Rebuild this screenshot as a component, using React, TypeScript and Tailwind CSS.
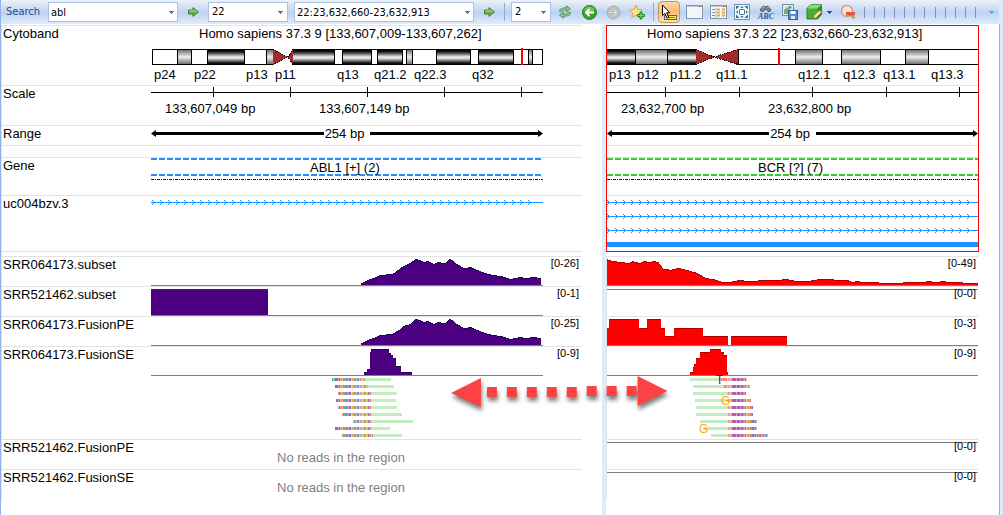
import type { ReactNode } from "react";

type Pt = [number, number];
type Mark = { x: number; text: string };
type Frame = { x: number; w: number };

const LEFT: Frame = { x: 151, w: 392 };
const RIGHT: Frame = { x: 607, w: 371 };

/* ---------- track helpers ---------- */

function Plot({ frame, top, height, children }: { frame: Frame; top: number; height: number; children: ReactNode }) {
  return (
    <svg
      className="block h-full w-full"
      viewBox={`${frame.x} ${top} ${frame.w} ${height}`}
      preserveAspectRatio="none"
      shapeRendering="crispEdges"
      aria-hidden="true"
    >
      {children}
    </svg>
  );
}

function Marks({ frame, items, className }: { frame: Frame; items: Mark[]; className: string }) {
  return (
    <>
      {items.map((m) => (
        <span
          key={m.text + m.x}
          className={`absolute whitespace-nowrap ${className}`}
          style={{ left: `${((m.x - frame.x) / frame.w) * 100}%` }}
        >
          {m.text}
        </span>
      ))}
    </>
  );
}

function sample(points: Pt[]): Pt[] {
  const out: Pt[] = [];
  for (let x = points[0][0]; x <= points[points.length - 1][0]; x++) {
    let i = 0;
    while (i < points.length - 2 && points[i + 1][0] <= x) i++;
    const [x0, y0] = points[i];
    const [x1, y1] = points[i + 1];
    out.push([x, Math.round(y0 + ((y1 - y0) * (x - x0)) / (x1 - x0 || 1))]);
  }
  return out;
}

function Histogram({ points, base, fill, edge }: { points: Pt[]; base: number; fill: string; edge: string }) {
  return (
    <g>
      {sample(points).map(([x, y]) => (
        <g key={x}>
          <rect x={x} y={y} width="1" height={base - y} fill={fill} />
          <rect x={x} y={y} width="1" height="1" fill={edge} />
        </g>
      ))}
    </g>
  );
}

type Bar = [number, number, number];

function Bars({ bars, base, fill, edge }: { bars: Bar[]; base: number; fill: string; edge: string }) {
  return (
    <g>
      {bars.map(([x0, x1, y]) => (
        <g key={x0}>
          <rect x={x0} y={y} width={x1 - x0} height={base - y} fill={fill} />
          <rect x={x0} y={y} width={x1 - x0} height="1" fill={edge} />
        </g>
      ))}
    </g>
  );
}

function Baseline({ frame, y }: { frame: Frame; y: number }) {
  return <rect x={frame.x} y={y} width={frame.w} height="1" fill="#808080" />;
}

/* ---------- cytoband ---------- */

type Band = [number, number, "dark" | "light"];

function Ideogram({ frame, start, end, bands, cent, cursor, id }: { frame: Frame; start: number; end: number; bands: Band[]; cent: [number, number, number]; cursor: number; id: string }) {
  return (
    <Plot frame={frame} top={26} height={59}>
      <defs>
        <linearGradient id={`${id}-dark`} x1="0" y1="0" x2="0" y2="1">
          <stop offset="0" stopColor="#000" />
          <stop offset="0.15" stopColor="#222" />
          <stop offset="0.5" stopColor="#ededed" />
          <stop offset="0.6" stopColor="#dcdcdc" />
          <stop offset="0.9" stopColor="#222" />
          <stop offset="1" stopColor="#000" />
        </linearGradient>
        <linearGradient id={`${id}-light`} x1="0" y1="0" x2="0" y2="1">
          <stop offset="0" stopColor="#707070" />
          <stop offset="0.5" stopColor="#efefef" />
          <stop offset="1" stopColor="#707070" />
        </linearGradient>
      </defs>
      <rect x={start} y="49" width={cent[0] - start} height="16" fill="#000" />
      <rect x={start + 1} y="50" width={cent[0] - start - 1} height="14" fill="#fff" />
      <rect x={cent[2]} y="49" width={end - cent[2]} height="16" fill="#000" />
      <rect x={cent[2] + 1} y="50" width={end - cent[2] - 2} height="14" fill="#fff" />
      {bands.map(([a, b, tone]) => (
        <g key={a}>
          <rect x={a} y="49" width={b - a + 1} height="16" fill="#000" />
          <rect x={a + 1} y="50" width={b - a - 1} height="14" fill={`url(#${id}-${tone})`} />
        </g>
      ))}
      <path d={`M${cent[0]} 49L${cent[1]} 57L${cent[0]} 65Z M${cent[2]} 49L${cent[1]} 57L${cent[2]} 65Z`} fill="#a52a2a" />
      <path
        d={`M${cent[0]} 49.5L${cent[1]} 57L${cent[0]} 64.5 M${cent[2]} 49.5L${cent[1]} 57L${cent[2]} 64.5`}
        fill="none"
        stroke="#000"
        strokeDasharray="1 1"
      />
      <rect x={cursor} y="48" width="2" height="17" fill="#f00" />
    </Plot>
  );
}

/* ---------- gene rows ---------- */

function ScaleAxis({ frame, ticks }: { frame: Frame; ticks: number[] }) {
  return (
    <Plot frame={frame} top={86} height={39}>
      <rect x={frame.x} y="92" width={frame.w} height="1" fill="#000" />
      {ticks.map((t) => (
        <rect key={t} x={t} y="87" width="1" height="10" fill="#000" />
      ))}
    </Plot>
  );
}

function RangeArrow() {
  return (
    <div className="flex h-[15px] items-center text-black">
      <svg className="h-[7px] w-[5px] shrink-0" viewBox="0 0 5 7" aria-hidden="true"><path d="M0 3.5L5 0V7Z" /></svg>
      <div className="h-[3px] flex-1 bg-black" />
      <span className="pr-1.5 pl-px leading-[15px]">254 bp</span>
      <div className="h-[3px] flex-1 bg-black" />
      <svg className="h-[7px] w-[5px] shrink-0" viewBox="0 0 5 7" aria-hidden="true"><path d="M5 3.5L0 0V7Z" /></svg>
    </div>
  );
}

function GeneSpan({ frame, color }: { frame: Frame; color: string }) {
  const end = frame.x + frame.w;
  return (
    <Plot frame={frame} top={158} height={37}>
      <path d={`M${frame.x} 159H${end}M${frame.x} 175H${end}`} stroke={color} strokeWidth="2" strokeDasharray="6 2" />
      <path d={`M${frame.x} 179.5H${end}`} stroke="#2b1018" strokeDasharray="3 1 1 1" />
    </Plot>
  );
}

function Transcripts({ frame, rows, first, solid }: { frame: Frame; rows: number[]; first: number; solid?: boolean }) {
  const heads = Array.from({ length: Math.floor((frame.w - 10) / 8) + 1 }, (_, i) => first + i * 8);
  return (
    <Plot frame={frame} top={196} height={55}>
      {rows.map((y) => (
        <g key={y} fill="#1e90ff">
          <rect x={frame.x} y={y} width={frame.w} height="1" />
          {heads.map((x) => (
            <path key={x} d={`M${x - 2} ${y - 2}h1v1h1v3h-1v1h-1v-1h1v-3h-1z`} />
          ))}
        </g>
      ))}
      {solid && <rect x={frame.x} y="242" width={frame.w} height="5" fill="#1e90ff" />}
    </Plot>
  );
}

/* ---------- coverage data ---------- */

const subsetLeft: Pt[] = [
  [361, 283], [363, 282], [367, 280], [373, 278], [380, 275], [391, 274], [395, 272], [400, 268], [403, 266], [410, 263],
  [415, 259], [420, 260], [423, 262], [428, 261], [434, 264], [437, 262], [445, 263], [449, 259], [452, 260], [455, 263],
  [460, 266], [463, 268], [471, 267], [477, 270], [485, 273], [493, 275], [501, 276], [510, 279], [520, 277], [526, 278],
  [533, 277], [540, 278],
];
const pairedLeft: Pt[] = subsetLeft.map(([x, y], i) => [x, y + 60 + (i > 5 && i < 10 ? i % 2 : 0)]);
const subsetRight: Pt[] = [
  [607, 259], [609, 260], [613, 261], [620, 262], [629, 263], [632, 261], [636, 262], [639, 263], [643, 261], [650, 262],
  [653, 261], [658, 262], [660, 265], [663, 269], [668, 269], [670, 270], [673, 269], [678, 268], [683, 269], [690, 271],
  [697, 273], [702, 276], [705, 278], [713, 279], [722, 282], [730, 282], [733, 281], [740, 280], [747, 281], [767, 280],
  [778, 280], [785, 279], [792, 280], [795, 281], [807, 281], [820, 279], [830, 279], [837, 280], [848, 280], [852, 282],
  [857, 281], [863, 282], [895, 283], [910, 282], [923, 282], [928, 281], [935, 282], [943, 281], [948, 282], [977, 283],
];
const singleLeft: Bar[] = [
  [364, 367, 372], [367, 370, 369], [370, 371, 352], [371, 389, 349], [389, 391, 353], [391, 393, 355], [393, 396, 358],
  [396, 401, 366], [401, 412, 372],
];
const pairedRight: Bar[] = [
  [607, 609, 328], [609, 639, 319], [639, 647, 328], [647, 661, 319], [661, 665, 328], [665, 674, 336], [674, 703, 328],
  [703, 728, 336], [731, 787, 336],
];
const singleRight: Bar[] = [
  [690, 693, 372], [693, 694, 367], [694, 696, 364], [696, 700, 358], [700, 710, 352], [710, 721, 349], [721, 724, 352],
  [724, 727, 355], [727, 728, 372],
];

/* ---------- read alignments ---------- */

const hue: Record<string, string> = {
  t: "#5fb5b5", p: "#b05cb5", v: "#8878c0", r: "#ff7a66", o: "#ffa25c", y: "#ffd06c", l: "#9fd0cc", k: "#d29ccb", g: "#a3ac7c",
};
const LEFT_BASES = "tltpvpkpokotttvtkpvyokgtltvykoyogryovorygo";
const RIGHT_BASES = "rogrorykoyopvppkvppkvprkvyogkrtvpkvltrtvlrrkrtl";

type Read = { from: number; mid: number; to: number };
const leftReads: Read[] = [
  { from: 332, mid: 365, to: 391 }, { from: 335, mid: 368, to: 394 }, { from: 338, mid: 371, to: 397 },
  { from: 336, mid: 371, to: 396 }, { from: 338, mid: 371, to: 397 }, { from: 342, mid: 371, to: 402 },
  { from: 353, mid: 371, to: 413 }, { from: 335, mid: 371, to: 390 }, { from: 342, mid: 373, to: 402 },
];
const rightReads: Read[] = [
  { from: 690, mid: 721, to: 747 }, { from: 693, mid: 724, to: 750 }, { from: 693, mid: 727, to: 746 },
  { from: 695, mid: 727, to: 751 }, { from: 696, mid: 727, to: 753 }, { from: 696, mid: 727, to: 753 },
  { from: 700, mid: 727, to: 757 }, { from: 703, mid: 727, to: 757 }, { from: 711, mid: 727, to: 768 },
];

function Reads({ reads, clip, origin, bases }: { reads: Read[]; clip: "start" | "end"; origin: number; bases: string }) {
  return (
    <g>
      {reads.map((r, i) => {
        const y = 378 + i * 7;
        const [a, b] = clip === "start" ? [r.from, r.mid] : [r.mid, r.to];
        return (
          <g key={i}>
            <rect x={r.from} y={y} width={r.to - r.from} height="3" fill="#c3edc0" />
            {Array.from({ length: b - a }, (_, k) => (
              <rect key={k} x={a + k} y={y} width="1" height="3" fill={hue[bases[(a + k - origin) % bases.length]]} />
            ))}
          </g>
        );
      })}
    </g>
  );
}

/* ---------- layout ---------- */

type RowProps = { h: string; label?: string; scale?: string; line?: string; children?: ReactNode };

function LeftRow({ h, label, scale, children }: RowProps) {
  return (
    <div className={`flex border-t border-[#e3e3e3] ${h}`}>
      <div className="w-[149px] shrink-0 pl-px leading-[15px]">{label}</div>
      <div className="relative min-w-0 flex-1">{children}</div>
      <div className="w-[39px] shrink-0 pr-[3px] text-right text-[11px] leading-[13px]">{scale}</div>
    </div>
  );
}

function RightRow({ h, scale, line = "border-[#e3e3e3]", children }: RowProps) {
  return (
    <div className={`relative border-t ${line} ${h}`}>
      {children}
      {scale && <span className="absolute top-0 right-0.5 text-[11px] leading-[13px]">{scale}</span>}
    </div>
  );
}

/* ---------- toolbar ---------- */

function Tool({ label, children, active, wide }: { label: string; children: ReactNode; active?: boolean; wide?: boolean }) {
  return (
    <button
      type="button"
      aria-label={label}
      className={`flex h-[22px] shrink-0 items-center justify-center ${wide ? "w-[34px] gap-1" : active ? "mr-0.5 w-[22px]" : "w-6"} ${
        active ? "rounded-sm border border-[#c0985a] bg-linear-to-b from-[#fbd7a8] via-[#fdbb6e] to-[#ffe3a6]" : ""
      }`}
    >
      {children}
    </button>
  );
}

function Caret({ color = "#4a7ab8" }: { color?: string }) {
  return (
    <svg className="h-[3px] w-[5px] shrink-0" viewBox="0 0 5 3" shapeRendering="crispEdges" aria-hidden="true">
      <path d="M0 0H5V1H4V2H3V3H2V2H1V1H0Z" fill={color} />
    </svg>
  );
}

function EditCombo({ label, value, width, id }: { label: string; value: string; width: string; id?: string }) {
  return (
    <div className={`flex h-5 shrink-0 items-center border border-[#a9c0e4] bg-white ${width}`}>
      <input id={id} aria-label={label} defaultValue={value} className="h-full min-w-0 flex-1 bg-transparent pl-0.5 text-[11px] text-black outline-none" />
      <button type="button" aria-label={`${label} list`} className="flex h-full w-3 items-center justify-center"><Caret /></button>
    </div>
  );
}

function PickCombo({ label, value, options, width }: { label: string; value: string; options: string[]; width: string }) {
  return (
    <div className={`relative flex h-5 shrink-0 items-center border border-[#a9c0e4] bg-white ${width}`}>
      <select aria-label={label} defaultValue={value} className="h-full w-full appearance-none bg-transparent pl-[3px] text-[11px] text-black outline-none">
        {options.map((o) => (
          <option key={o}>{o}</option>
        ))}
      </select>
      <span className="pointer-events-none absolute right-1"><Caret /></span>
    </div>
  );
}

function Go({ label }: { label: string }) {
  return (
    <button type="button" aria-label={label} className="flex h-[22px] w-[30px] shrink-0 items-center justify-center">
      <svg width="11" height="10" viewBox="0 0 11 10" aria-hidden="true">
        <path d="M0.5 3H5V0.6L10.4 5L5 9.4V7H0.5Z" fill="#6ab04a" stroke="#3f7f2c" />
        <path d="M1.5 4H6V3L8.5 5" fill="none" stroke="#b4dc94" />
      </svg>
    </button>
  );
}

const Separator = ({ className }: { className: string }) => <span className={`h-[18px] w-px shrink-0 bg-[#8aa9d6] ${className}`} />;

function Toolbar() {
  return (
    <div className="mr-1 flex h-[25px] items-center rounded-r-sm bg-linear-to-b from-[#eef2f8] from-0% via-[#bdd3f2] via-50% to-[#e3eefc] to-100% pb-px pl-[5px] font-['DejaVu_Sans_Condensed','DejaVu_Sans',sans-serif] text-[11px]">
      <label htmlFor="search" className="w-[42px] shrink-0 text-[#1e4c96]">Search</label>
      <EditCombo id="search" label="Search" value="abl" width="w-[130px]" />
      <Go label="Run search" />
      <PickCombo label="Chromosome" value="22" options={["9", "22"]} width="w-20" />
      <span className="w-1.5 shrink-0" />
      <EditCombo label="Region" value="22:23,632,660-23,632,913" width="w-[180px]" />
      <Go label="Go to region" />
      <Separator className="mr-1.5" />
      <PickCombo label="Views" value="2" options={["1", "2", "3", "4"]} width="w-10" />
      <span className="w-0.5 shrink-0" />
      <Tool label="Refresh">
        <svg width="14" height="14" viewBox="0 0 14 14" aria-hidden="true">
          <path d="M1.5 6.5C1.500 4 3.500 2.800 8.500 2.800V0.8L12.5 3.900L8.5 6.800V5C5.500 5 4.500 5.500 3.500 6.8Z" fill="#8cc486" stroke="#4f9160" strokeWidth="0.9" />
          <path d="M12.5 7.500C12.500 10 10.500 11.200 5.500 11.200V13.2L1.5 10.100L5.5 7.200V9C8.500 9 9.500 8.500 10.5 7.2Z" fill="#8cc486" stroke="#4f9160" strokeWidth="0.9" />
        </svg>
      </Tool>
      <Tool label="Back">
        <svg width="15" height="15" viewBox="0 0 15 15" aria-hidden="true">
          <circle cx="7.5" cy="7.5" r="7" fill="#35a52c" stroke="#22841c" />
          <ellipse cx="7.5" cy="4.5" rx="5" ry="3" fill="#8fd67d" opacity="0.6" />
          <path d="M12 7.5H4.5M7.5 4L4 7.5L7.5 11" fill="none" stroke="#fff" strokeWidth="2" />
        </svg>
      </Tool>
      <Tool label="Forward">
        <svg width="15" height="15" viewBox="0 0 15 15" aria-hidden="true">
          <circle cx="7.5" cy="7.5" r="6.5" fill="#c0c3c6" stroke="#a9adb3" />
          <path d="M3 7.5H10.5M7.5 4L11 7.5L7.5 11" fill="none" stroke="#a3a7ab" strokeWidth="2.4" />
          <path d="M3 7.5H10.5M7.5 4L11 7.5L7.5 11" fill="none" stroke="#e0e2e4" strokeWidth="1.4" />
        </svg>
      </Tool>
      <Tool label="Add bookmark">
        <svg width="16" height="16" viewBox="0 0 16 16" aria-hidden="true">
          <path d="M7 1L9 5.5L13.5 6L10.3 9L11.2 13.5L7 11.2L2.8 13.5L3.7 9L0.5 6L5 5.5Z" fill="#ffe08a" stroke="#d8a747" />
          <path d="M11 8H13V10.5H15.5V12.5H13V15H11V12.5H8.5V10.5H11Z" fill="#5ee05a" stroke="#137a1b" strokeWidth="0.9" />
        </svg>
      </Tool>
      <Separator className="mx-1" />
      <Tool label="Select" active>
        <svg className="shrink-0" width="18" height="17" viewBox="0 0 18 17" aria-hidden="true">
          <rect x="4.5" y="11.5" width="12" height="4" fill="#ffe34a" stroke="#3a62c0" />
          <path d="M7 13.5H14.5" stroke="#5b7fd0" />
          <path d="M2.5 1V11.5L4.8 9.3L7 14L8.8 13.2L6.6 8.8H9.8Z" fill="#fff" stroke="#000" />
        </svg>
      </Tool>
      <Tool label="Single pane">
        <svg width="17" height="14" viewBox="0 0 17 14" aria-hidden="true">
          <rect x="0.5" y="0.5" width="16" height="13" fill="#f4f5f5" stroke="#7f97b5" />
          <path d="M1 1.5H16" stroke="#b8c9de" /><path d="M13 1.5H15.5" stroke="#e2603c" />
        </svg>
      </Tool>
      <Tool label="Table pane">
        <svg width="17" height="14" viewBox="0 0 17 14" aria-hidden="true">
          <rect x="0.5" y="0.5" width="16" height="13" fill="#fdf6e4" stroke="#7f97b5" />
          <path d="M1 1.5H16" stroke="#b8c9de" /><path d="M13 1.5H15.5" stroke="#e2603c" />
          <path d="M2 4.5H5M2 7.5H5M2 10.5H5" stroke="#7b93bd" />
          <path d="M7 4.5H10M12 4.5H15M7 7.5H10M12 7.5H15M7 10.5H10M12 10.5H15" stroke="#e0ac4c" strokeWidth="2" />
          <path d="M6 3V13" stroke="#a7b5cc" />
        </svg>
      </Tool>
      <Tool label="Fit to window">
        <svg width="16" height="16" viewBox="0 0 16 16" aria-hidden="true">
          <rect x="0.5" y="0.5" width="15" height="15" fill="#eef7fc" stroke="#6f93b3" />
          <path d="M2 2H5.5L2 5.5ZM14 2H10.5L14 5.5ZM2 14H5.5L2 10.5ZM14 14H10.5L14 10.5ZM8 2L9.5 4H6.5ZM8 14L9.5 12H6.5ZM2 8L4 6.5V9.5ZM14 8L12 6.5V9.5Z" fill="#2f6a91" />
          <rect x="5.5" y="5.5" width="5" height="5" rx="1" fill="#fff" stroke="#2f6a91" />
        </svg>
      </Tool>
      <Tool label="Find text">
        <span className="flex flex-col items-center">
          <svg width="13" height="8" viewBox="0 0 13 8" aria-hidden="true">
            <path d="M1 5L4 1.2L6.5 2L9 1.2L12 5L10 7L7.5 5L6.5 4L5.5 5L3.5 7Z" fill="#7d848d" stroke="#4d545c" />
            <path d="M3.5 3L5 2M9.5 3L8.5 2" stroke="#cfd4da" />
          </svg>
          <span className="font-['Liberation_Serif',serif] text-[8px] leading-[7px] font-bold text-[#2c5299] italic">ABC</span>
        </span>
      </Tool>
      <Tool label="Save picture">
        <svg width="16" height="16" viewBox="0 0 16 16" aria-hidden="true">
          <rect x="0.5" y="0.5" width="11" height="11" fill="#dcebf6" stroke="#7291ab" />
          <path d="M2 10V6L5 3L9 7V10Z" fill="#76ac6b" /><circle cx="8" cy="3.5" r="1.4" fill="#4c9b58" />
          <rect x="6.5" y="6.5" width="9" height="9" fill="#5b8ccd" stroke="#305f9f" />
          <rect x="8.5" y="7" width="5" height="3" fill="#fff" /><rect x="9" y="12" width="4" height="3" fill="#dfe8f3" />
        </svg>
      </Tool>
      <Tool label="Edit track" wide>
        <svg width="17" height="16" viewBox="0 0 17 16" aria-hidden="true">
          <path d="M1 4L5 0.8H15.5V10.5L11.5 15H1Z" fill="#48ab3d" stroke="#2c8129" />
          <path d="M1 4L5 1H15.5L11.5 4.5H1Z" fill="#8bdc74" /><path d="M11.5 4.5L15.5 1V10.5L11.5 15Z" fill="#2e8b2d" />
          <path d="M7 14.5L8 11.5L13.5 6L15.8 8.3L10.2 13.8Z" fill="#ffe394" stroke="#80652c" strokeWidth="0.8" />
        </svg>
        <Caret color="#24559b" />
      </Tool>
      <Tool label="Zoom out">
        <svg width="17" height="17" viewBox="0 0 17 17" aria-hidden="true">
          <path d="M10 10L14.5 14.5" stroke="#d59a4d" strokeWidth="2.5" />
          <circle cx="7" cy="7" r="5.5" fill="#f4e6df" stroke="#dca07a" strokeWidth="1.5" />
          <rect x="6.5" y="8.5" width="8" height="2.5" fill="#ff5340" stroke="#cf3527" strokeWidth="0.7" />
        </svg>
      </Tool>
      <div className="relative ml-1 flex h-3 w-[112px] shrink-0 items-center justify-between">
        {Array.from({ length: 12 }, (_, i) => (
          <span key={i} className="h-[11px] w-px bg-[#8d8fb0]" />
        ))}
        <input type="range" aria-label="Zoom" min="0" max="11" defaultValue="0" className="absolute inset-0 w-full opacity-0" />
      </div>
      <button type="button" aria-label="More tools" className="mr-1 ml-auto flex h-full w-2 items-center justify-center">
        <Caret color="#7d9cc9" />
      </button>
    </div>
  );
}

function FusionArrow() {
  const dots = [487, 507, 527, 547, 567, 587, 607, 627];
  return (
    <svg
      className="pointer-events-none absolute top-[347px] left-[44.6%] h-[44px] w-[22.8%]"
      viewBox="446 371 228 44"
      preserveAspectRatio="none"
      aria-hidden="true"
    >
      <g fill="#fb4343" className="drop-shadow-[1px_4px_2px_rgba(0,0,0,0.5)]">
        <path d="M451 393L481 378V407Z" />
        <path d="M668 391L638 376V406Z" />
        {dots.map((x, i) => (
          <rect key={x} x={x} y={i < 5 ? 387 : 386} width="10" height="10" />
        ))}
      </g>
    </svg>
  );
}

const NO_READS = "No reads in the region";

export default function App() {
  return (
    <div className="flex min-h-screen flex-col border-l border-[#8fb3ea] bg-[#dce9fa] font-['Liberation_Sans',Arial,sans-serif] text-[13px] text-black">
      <Toolbar />
      <main className="relative -mt-px mr-[3px] flex flex-1 border-r border-[#8fb0e0] bg-white pt-px">
        <section aria-label="Chromosome 9" className="min-w-0 flex-[601_1_0%]">
          <div className="mr-5 border-l border-[#e3e3e3]">
            <div className="border-b border-[#e3e3e3]">
              <LeftRow h="h-[60px]" label="Cytoband">
                <Ideogram
                  id="nine"
                  frame={LEFT}
                  start={152}
                  end={543}
                  cent={[273, 288, 293]}
                  cursor={521}
                  bands={[
                    [177, 191, "light"], [207, 244, "dark"], [266, 273, "light"], [292, 334, "dark"], [342, 371, "dark"], [377, 402, "dark"],
                    [406, 412, "light"], [436, 470, "dark"], [478, 513, "dark"], [528, 532, "light"],
                  ]}
                />
                <Marks frame={LEFT} className="top-0 leading-[15px]" items={[{ x: 199, text: "Homo sapiens 37.3 9 [133,607,009-133,607,262]" }]} />
                <Marks
                  frame={LEFT}
                  className="top-[41px] leading-[15px]"
                  items={[
                    { x: 154, text: "p24" }, { x: 194, text: "p22" }, { x: 246, text: "p13" }, { x: 275, text: "p11" },
                    { x: 337, text: "q13" }, { x: 374, text: "q21.2" }, { x: 414, text: "q22.3" }, { x: 472, text: "q32" },
                  ]}
                />
              </LeftRow>
              <LeftRow h="h-10" label="Scale">
                <ScaleAxis frame={LEFT} ticks={[213, 290, 367, 444, 521]} />
                <Marks frame={LEFT} className="top-[15px] leading-[15px]" items={[{ x: 165, text: "133,607,049 bp" }, { x: 319, text: "133,607,149 bp" }]} />
              </LeftRow>
              <LeftRow h="h-5" label="Range"><RangeArrow /></LeftRow>
              <LeftRow h="h-3" />
              <LeftRow h="h-[38px]" label="Gene">
                <GeneSpan frame={LEFT} color="#1e90ff" />
                <Marks frame={LEFT} className="top-[2px] leading-[15px]" items={[{ x: 310, text: "ABL1 [+] (2)" }]} />
              </LeftRow>
              <LeftRow h="h-14" label="uc004bzv.3"><Transcripts frame={LEFT} rows={[202]} first={154} /></LeftRow>
            </div>
            <div className="h-1" />
            <LeftRow h="h-[30px]" label="SRR064173.subset" scale="[0-26]">
              <Plot frame={LEFT} top={257} height={29}>
                <Histogram points={subsetLeft} base={285} fill="#4b0082" edge="#1c0850" />
                <Baseline frame={LEFT} y={285} />
              </Plot>
            </LeftRow>
            <LeftRow h="h-[30px]" label="SRR521462.subset" scale="[0-1]">
              <Plot frame={LEFT} top={287} height={29}>
                <Bars bars={[[151, 268, 289]]} base={315} fill="#4b0082" edge="#a00010" />
                <Baseline frame={LEFT} y={315} />
              </Plot>
            </LeftRow>
            <LeftRow h="h-[30px]" label="SRR064173.FusionPE" scale="[0-25]">
              <Plot frame={LEFT} top={317} height={29}>
                <Histogram points={pairedLeft} base={345} fill="#4b0082" edge="#1c0850" />
                <Baseline frame={LEFT} y={345} />
              </Plot>
            </LeftRow>
            <LeftRow h="h-[93px]" label="SRR064173.FusionSE" scale="[0-9]">
              <Plot frame={LEFT} top={347} height={92}>
                <Bars bars={singleLeft} base={375} fill="#4b0082" edge="#1c0850" />
                <Baseline frame={LEFT} y={375} />
                <Reads reads={leftReads} clip="start" origin={332} bases={LEFT_BASES} />
              </Plot>
            </LeftRow>
            <LeftRow h="h-[30px]" label="SRR521462.FusionPE">
              <Marks frame={LEFT} className="top-[9px] leading-[17px] text-[#808080]" items={[{ x: 277, text: NO_READS }]} />
            </LeftRow>
            <LeftRow h="h-[30px]" label="SRR521462.FusionSE">
              <Marks frame={LEFT} className="top-[9px] leading-[17px] text-[#808080]" items={[{ x: 277, text: NO_READS }]} />
            </LeftRow>
          </div>
        </section>
        <div className="w-1 shrink-0 bg-[#e0ebfb]" />
        <section aria-label="Chromosome 22" className="min-w-0 flex-[393_1_0%]">
          <div className="mr-5 border-x border-b border-[#f00]">
            <RightRow h="h-[60px]" line="border-[#f00]">
              <Ideogram
                id="twentytwo"
                frame={RIGHT}
                start={607}
                end={980}
                cent={[696, 714, 738]}
                cursor={778}
                bands={[
                  [605, 635, "dark"], [635, 667, "light"], [667, 696, "dark"], [795, 822, "light"], [841, 880, "light"], [905, 928, "light"],
                ]}
              />
              <Marks frame={RIGHT} className="top-0 leading-[15px]" items={[{ x: 647, text: "Homo sapiens 37.3 22 [23,632,660-23,632,913]" }]} />
              <Marks
                frame={RIGHT}
                className="top-[41px] leading-[15px]"
                items={[
                  { x: 609, text: "p13" }, { x: 637, text: "p12" }, { x: 670, text: "p11.2" }, { x: 716, text: "q11.1" },
                  { x: 798, text: "q12.1" }, { x: 843, text: "q12.3" }, { x: 883, text: "q13.1" }, { x: 931, text: "q13.3" },
                ]}
              />
            </RightRow>
            <RightRow h="h-10">
              <ScaleAxis frame={RIGHT} ticks={[665, 739, 812, 886, 959]} />
              <Marks frame={RIGHT} className="top-[15px] leading-[15px]" items={[{ x: 621, text: "23,632,700 bp" }, { x: 768, text: "23,632,800 bp" }]} />
            </RightRow>
            <RightRow h="h-5"><RangeArrow /></RightRow>
            <RightRow h="h-3" />
            <RightRow h="h-[38px]">
              <GeneSpan frame={RIGHT} color="#32cd32" />
              <Marks frame={RIGHT} className="top-[2px] leading-[15px]" items={[{ x: 758, text: "BCR [?] (7)" }]} />
            </RightRow>
            <RightRow h="h-14"><Transcripts frame={RIGHT} rows={[202, 216, 230]} first={609} solid /></RightRow>
          </div>
          <div className="h-1" />
          <div className="mr-5 border-r border-l border-r-transparent border-l-[#e3e3e3]">
            <RightRow h="h-[30px]" scale="[0-49]">
              <Plot frame={RIGHT} top={257} height={29}>
                <Histogram points={subsetRight} base={285} fill="#ff0000" edge="#b00000" />
                <Baseline frame={RIGHT} y={285} />
              </Plot>
            </RightRow>
            <RightRow h="h-[30px]" scale="[0-0]">
              <Plot frame={RIGHT} top={287} height={29}><Baseline frame={RIGHT} y={289} /></Plot>
            </RightRow>
            <RightRow h="h-[30px]" scale="[0-3]">
              <Plot frame={RIGHT} top={317} height={29}>
                <Bars bars={pairedRight} base={345} fill="#ff0000" edge="#b00000" />
                <Baseline frame={RIGHT} y={345} />
              </Plot>
            </RightRow>
            <RightRow h="h-[93px]" scale="[0-9]">
              <Plot frame={RIGHT} top={347} height={92}>
                <Bars bars={singleRight} base={375} fill="#ff0000" edge="#b00000" />
                <Baseline frame={RIGHT} y={375} />
                <Reads reads={rightReads} clip="end" origin={721} bases={RIGHT_BASES} />
              </Plot>
              <Marks frame={RIGHT} className="top-[26px] text-[12px] leading-[14px] text-[#800080]" items={[{ x: 716, text: "T" }]} />
              <Marks frame={RIGHT} className="top-[47px] text-[12px] leading-[14px] text-[#ffa500]" items={[{ x: 721, text: "G" }]} />
              <Marks frame={RIGHT} className="top-[75px] text-[12px] leading-[14px] text-[#ffa500]" items={[{ x: 699, text: "G" }]} />
            </RightRow>
            <RightRow h="h-[30px]" scale="[0-0]">
              <Plot frame={RIGHT} top={440} height={29}><Baseline frame={RIGHT} y={442} /></Plot>
            </RightRow>
            <RightRow h="h-[30px]" scale="[0-0]">
              <Plot frame={RIGHT} top={470} height={29}><Baseline frame={RIGHT} y={472} /></Plot>
            </RightRow>
          </div>
        </section>
        <FusionArrow />
      </main>
    </div>
  );
}
